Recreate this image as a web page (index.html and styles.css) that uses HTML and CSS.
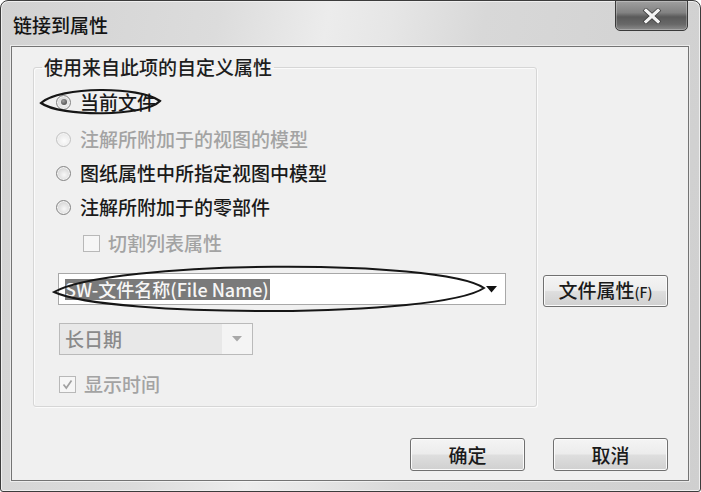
FILE: index.html
```html
<!DOCTYPE html>
<html lang="zh-CN">
<head>
<meta charset="utf-8">
<title>链接到属性</title>
<link rel="stylesheet" href="styles.css">
</head>
<body>
<div class="window">
  <div class="titlebar">
    <span class="title">链接到属性</span>
    <button class="close" aria-label="关闭">
      <svg width="22" height="16" viewBox="0 0 22 16"><path d="M5 2.5 L17 13.5 M17 2.5 L5 13.5" stroke="#3a3a3a" stroke-width="4.6" stroke-linecap="square" fill="none"/><path d="M5 2.5 L17 13.5 M17 2.5 L5 13.5" stroke="#f4f4f4" stroke-width="3.2" stroke-linecap="square" fill="none"/></svg>
    </button>
  </div>
  <div class="client">
    <div class="main">
      <fieldset class="group">
        <legend>使用来自此项的自定义属性</legend>
        <div class="opts">
          <label class="opt"><span class="radio checked"></span>当前文件</label>
          <label class="opt opt-second disabled"><span class="radio dis"></span>注解所附加于的视图的模型</label>
          <label class="opt opt-next"><span class="radio"></span>图纸属性中所指定视图中模型</label>
          <label class="opt opt-next"><span class="radio"></span>注解所附加于的零部件</label>
          <label class="opt check-row disabled"><span class="checkbox"></span>切割列表属性</label>
          <div class="combo">
            <span class="sel">SW-文件名称(File Name)</span>
            <svg class="combo-arrow" width="11" height="7" viewBox="0 0 11 7"><path d="M0 0 H11 L5.5 6.5 Z" fill="#111"/></svg>
          </div>
          <div class="date">
            <span class="date-field">长日期</span>
            <span class="date-btn"><svg width="10" height="6" viewBox="0 0 10 6"><path d="M0 0 H10 L5 5.5 Z" fill="#a8a8a8"/></svg></span>
          </div>
          <label class="opt time-row disabled"><span class="checkbox"><svg width="15" height="15" viewBox="0 0 15 15"><path d="M3.5 7.5 L6.3 11 L11.5 3.5" stroke="#a0a0a0" stroke-width="1.7" fill="none"/></svg></span>显示时间</label>
        </div>
      </fieldset>
      <div class="side">
        <button class="btn btn-file">文件属性<small>(F)</small></button>
      </div>
    </div>
    <div class="footer">
      <button class="btn">确定</button>
      <button class="btn">取消</button>
    </div>
  </div>
  <svg class="annot" width="701" height="492" viewBox="0 0 701 492">
    <path d="M41 103 C60 86 140 86 160 101 C145 117 60 117 41 103 Z" fill="none" stroke="#161616" stroke-width="2.2"/>
    <path d="M54 292 C110 260 440 258 484 288 C440 318 110 318 54 292 Z" fill="none" stroke="#161616" stroke-width="2"/>
  </svg>
</div>
</body>
</html>
```
FILE: styles.css
```css
html, body {
  margin: 0;
  padding: 0;
}
body {
  width: 701px;
  height: 492px;
  overflow: hidden;
  background: #ffffff;
  font-family: "Noto Sans CJK SC", "Noto Sans", sans-serif;
  font-weight: 500;
}
.window {
  position: relative;
  box-sizing: border-box;
  width: 701px;
  height: 492px;
  border: 1px solid #3c3c3c;
  border-radius: 8px 8px 3px 3px;
  padding: 0 11px 10px 10px;
  display: flex;
  flex-direction: column;
  background: linear-gradient(100deg, #d2d2d2 0%, #dcdcdc 28%, #ececec 42%, #e6e6e6 50%, #d8d8d8 62%, #cfcfcf 100%);
  box-shadow: inset 0 0 0 1px #efefef;
}
.titlebar {
  height: 45px;
  display: flex;
  align-items: flex-start;
}
.title {
  padding: 12px 0 0 2px;
  font-size: 19px;
  line-height: 24px;
  color: #141414;
}
.close {
  margin-left: auto;
  margin-right: 1px;
  margin-top: -1px;
  width: 73px;
  height: 31px;
  box-sizing: border-box;
  padding: 0;
  border: 1px solid #3a3a3a;
  border-radius: 0 0 5px 5px;
  background: linear-gradient(#a0a0a0 0%, #828282 40%, #5a5a5a 55%, #686868 80%, #8c8c8c 100%);
  box-shadow: inset 0 0 0 1px rgba(255,255,255,0.25);
  display: flex;
  align-items: center;
  justify-content: center;
}
.client {
  flex: 1;
  border: 1px solid #747474;
  background: #f0f0f0;
  padding: 9px 20px 0 21px;
  display: flex;
  flex-direction: column;
  box-shadow: 0 0 0 1px rgba(255,255,255,0.55);
}
.main {
  display: flex;
  align-items: flex-start;
}
.group {
  box-sizing: border-box;
  width: 504px;
  margin: 0;
  padding: 0 0 10px 0;
  min-width: 0;
  border: 1px solid #d6d6d6;
  border-radius: 3px;
  box-shadow: inset 1px 1px 0 #fbfbfb, 1px 1px 0 #fbfbfb;
}
.group legend {
  margin-left: 8px;
  padding: 0 2px;
  font-size: 19px;
  line-height: 22px;
  color: #1e1e1e;
}
.opts {
  display: flex;
  flex-direction: column;
  align-items: flex-start;
  padding: 12px 0 0 23px;
}
.opt {
  display: flex;
  align-items: center;
  height: 24px;
  font-size: 19px;
  line-height: 24px;
  color: #1a1a1a;
  white-space: nowrap;
}
.opt-second { margin-top: 13px; }
.opt-next { margin-top: 10px; }
.disabled { color: #a3a3a3; }
.radio {
  position: relative;
  box-sizing: border-box;
  width: 15px;
  height: 15px;
  margin-left: -1px;
  margin-right: 9px;
  border-radius: 50%;
  border: 1px solid #858585;
  background: radial-gradient(circle at 55% 60%, #f8f8f8 0%, #e2e2e2 45%, #c4c4c4 100%);
  box-shadow: inset 0 0 0 1px #f4f4f4;
}
.radio.checked::after {
  content: "";
  position: absolute;
  left: 3.5px;
  top: 3.5px;
  width: 6px;
  height: 6px;
  border-radius: 50%;
  background: radial-gradient(circle at 40% 35%, #a0a0a0, #3a3a3a);
}
.radio.dis {
  border-color: #c2c2c2;
  background: radial-gradient(circle at 55% 60%, #fcfcfc 0%, #eeeeee 50%, #dddddd 100%);
}
.check-row {
  margin-top: 12px;
  margin-left: 26px;
}
.checkbox {
  box-sizing: border-box;
  width: 17px;
  height: 17px;
  margin-right: 8px;
  border: 1px solid #b8b8b8;
  background: #f6f6f6;
  display: flex;
  align-items: center;
  justify-content: center;
}
.combo {
  margin-top: 18px;
  margin-left: 1px;
  box-sizing: border-box;
  width: 448px;
  height: 32px;
  border: 1px solid #a8a8a8;
  background: #ffffff;
  display: flex;
  align-items: center;
  padding-left: 6px;
}
.sel {
  height: 21px;
  line-height: 21px;
  font-size: 18px;
  background: #7a7a7a;
  color: #f6f6f6;
  padding-right: 1px;
  white-space: nowrap;
}
.combo-arrow {
  margin-left: auto;
  margin-right: 8px;
}
.date {
  margin-top: 18px;
  margin-left: 2px;
  box-sizing: border-box;
  width: 194px;
  height: 32px;
  border: 1px solid #bababa;
  background: #f4f4f4;
  display: flex;
}
.date-field {
  width: 162px;
  padding-left: 5px;
  box-sizing: border-box;
  background: #e8e8e8;
  color: #8a8a8a;
  font-size: 19px;
  line-height: 30px;
}
.date-btn {
  flex: 1;
  display: flex;
  align-items: center;
  justify-content: center;
}
.time-row {
  margin-top: 17px;
  margin-left: 2px;
}
.side {
  padding-top: 219px;
  margin-left: 6px;
}
.btn {
  box-sizing: border-box;
  width: 115px;
  height: 33px;
  padding: 0;
  border: 1px solid #707070;
  border-radius: 3px;
  background: linear-gradient(#f4f4f4 0%, #ececec 48%, #dedede 52%, #d0d0d0 100%);
  box-shadow: inset 0 0 0 1px #fbfbfb;
  font-family: "Noto Sans CJK SC", "Noto Sans", sans-serif;
  font-weight: 500;
  font-size: 19px;
  line-height: 28px;
  color: #1a1a1a;
}
.btn-file {
  width: 125px;
  height: 32px;
}
.btn-file small {
  font-size: 14px;
}
.footer {
  margin-top: 31px;
  display: flex;
  justify-content: flex-end;
  gap: 28px;
}
.annot {
  position: absolute;
  left: -1px;
  top: -1px;
  pointer-events: none;
}
```
